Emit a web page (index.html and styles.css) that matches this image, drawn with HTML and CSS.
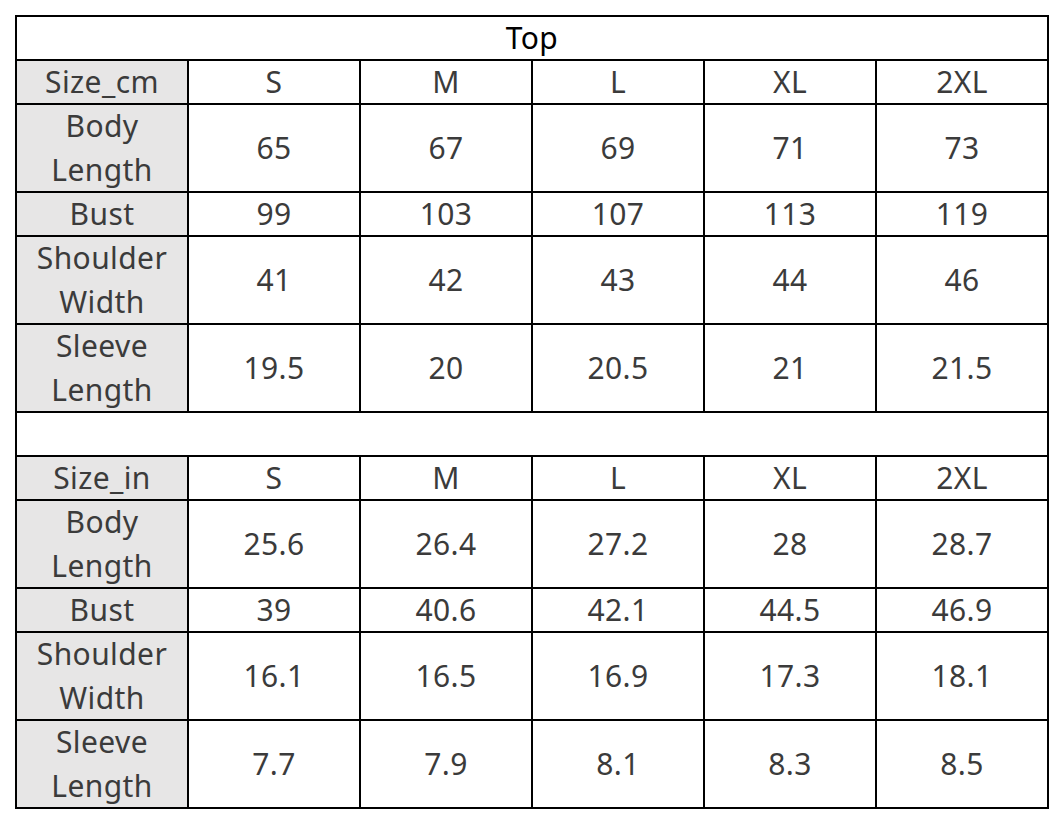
FILE: index.html
```html
<!DOCTYPE html>
<html>
<head>
<meta charset="utf-8">
<link rel="stylesheet" href="styles.css">
</head>
<body>
<div class="sheet">
  <div class="cell title span">Top</div>

  <div class="cell head">Size_cm</div><div class="cell">S</div><div class="cell">M</div><div class="cell">L</div><div class="cell">XL</div><div class="cell">2XL</div>
  <div class="cell head tall">Body<br>Length</div><div class="cell tall">65</div><div class="cell tall">67</div><div class="cell tall">69</div><div class="cell tall">71</div><div class="cell tall">73</div>
  <div class="cell head">Bust</div><div class="cell">99</div><div class="cell">103</div><div class="cell">107</div><div class="cell">113</div><div class="cell">119</div>
  <div class="cell head tall">Shoulder<br>Width</div><div class="cell tall">41</div><div class="cell tall">42</div><div class="cell tall">43</div><div class="cell tall">44</div><div class="cell tall">46</div>
  <div class="cell head tall">Sleeve<br>Length</div><div class="cell tall">19.5</div><div class="cell tall">20</div><div class="cell tall">20.5</div><div class="cell tall">21</div><div class="cell tall">21.5</div>

  <div class="cell span"></div>

  <div class="cell head">Size_in</div><div class="cell">S</div><div class="cell">M</div><div class="cell">L</div><div class="cell">XL</div><div class="cell">2XL</div>
  <div class="cell head tall">Body<br>Length</div><div class="cell tall">25.6</div><div class="cell tall">26.4</div><div class="cell tall">27.2</div><div class="cell tall">28</div><div class="cell tall">28.7</div>
  <div class="cell head">Bust</div><div class="cell">39</div><div class="cell">40.6</div><div class="cell">42.1</div><div class="cell">44.5</div><div class="cell">46.9</div>
  <div class="cell head tall">Shoulder<br>Width</div><div class="cell tall">16.1</div><div class="cell tall">16.5</div><div class="cell tall">16.9</div><div class="cell tall">17.3</div><div class="cell tall">18.1</div>
  <div class="cell head tall">Sleeve<br>Length</div><div class="cell tall">7.7</div><div class="cell tall">7.9</div><div class="cell tall">8.1</div><div class="cell tall">8.3</div><div class="cell tall">8.5</div>
</div>
</body>
</html>
```

FILE: styles.css
```css
html, body {
  margin: 0;
  padding: 0;
  background: #ffffff;
}

body {
  padding: 15px 0 0 15px;
  font-family: "Noto Sans", "Open Sans", sans-serif;
}

.sheet {
  display: grid;
  grid-template-columns: repeat(6, 170px);
  grid-auto-rows: 42px;
  gap: 2px;
  padding: 2px;
  background: #000000;
  width: max-content;
}

.cell {
  background: #ffffff;
  color: #3b3b3b;
  font-size: 30px;
  letter-spacing: 0.4px;
  line-height: 44px;
  padding-bottom: 1px;
  display: flex;
  align-items: center;
  justify-content: center;
  text-align: center;
  white-space: nowrap;
}

.cell.tall {
  grid-row: span 2;
}

.cell.span {
  grid-column: 1 / -1;
}

.cell.head {
  background: #e7e6e6;
}

.cell.title {
  color: #000000;
}
```
